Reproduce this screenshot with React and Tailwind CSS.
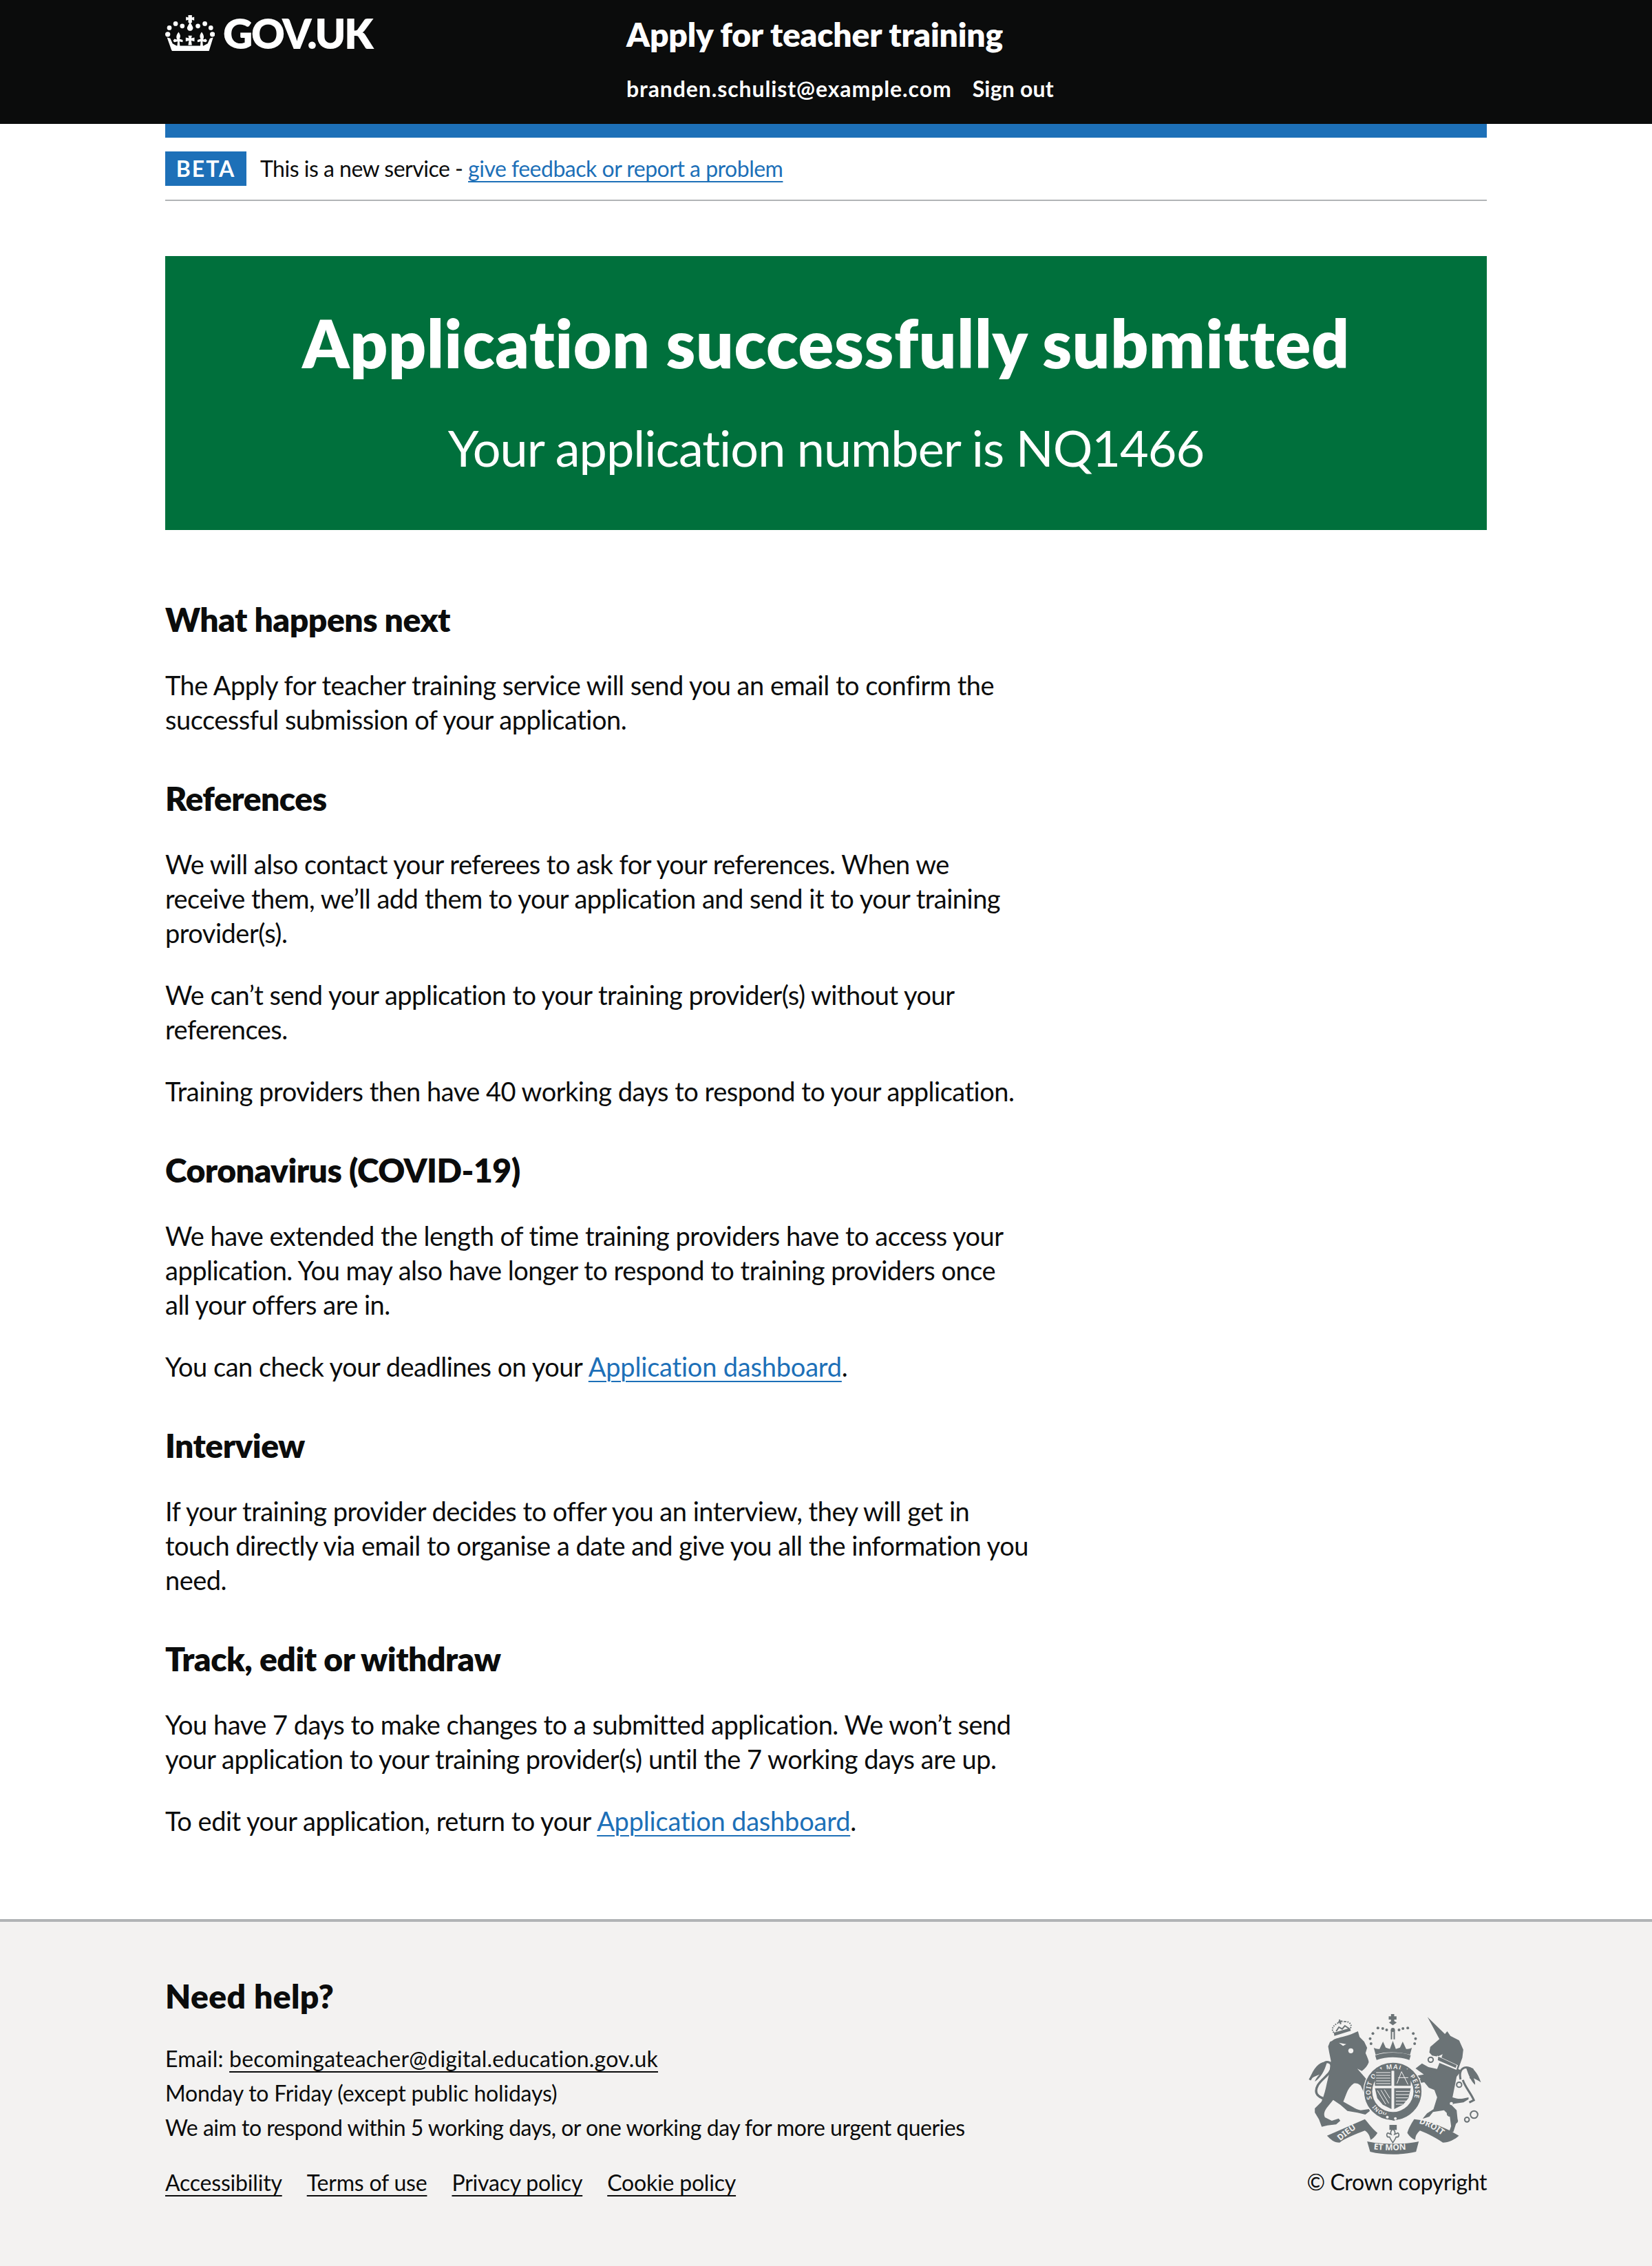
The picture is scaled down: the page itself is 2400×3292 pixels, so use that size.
const font = "font-['Lato',sans-serif]"

function Crown() {
  return (
    <svg viewBox="60 35 215 155" className="w-[72px] h-[52px] shrink-0" fill="#fff">
      <path d="M160 35h16v10l10-3v16l-10-3v12l-5 2 9 17c3 8-3 17-12 17s-15-9-12-17l9-17-5-2V55l-10 3V42l10 3z" />
      <circle cx="105" cy="72" r="10" />
      <circle cx="134" cy="82" r="10" />
      <circle cx="78" cy="90" r="10" />
      <circle cx="71" cy="118" r="11" />
      <circle cx="232" cy="72" r="10" />
      <circle cx="202" cy="82" r="10" />
      <circle cx="258" cy="90" r="10" />
      <circle cx="265" cy="118" r="11" />
      <path d="M118 108c8 12 10 20 4 30l14 4 0 10-14-3 2 20h-12l2-20-14 3-6-6 6-8 12 3c-6-10-4-20 6-33z" />
      <path d="M218 108c-8 12-10 20-4 30l-14 4 0 10 14-3-2 20h12l-2-20 14 3 6-6-6-8-12 3c6-10 4-20-6-33z" />
      <path d="M160 124h16l-3 11 14-3v17l-14-4 3 20h-16l3-20-14 4v-17l14 3z" />
      <path d="M68 132l14 4 10 22 18 10h116l18-10 10-22 14-4-18 58H90l-3-4z" />
    </svg>
  )
}

function Arms() {
  return (
    <svg viewBox="130 115 755 612" className="w-[252px] h-[204px]" fill="#6b7376">
      <defs>
        <path id="garterTop" d="M406 485A97 97 0 1 1 559 526" />
        <path id="garterLeft" d="M472 546A97 97 0 0 1 406 485" />
        <path id="ribLeft" d="M268 668C300 640 340 610 372 595" />
        <path id="ribMid" d="M410 704c50 6 120 6 176-2" />
        <path id="ribRight" d="M610 592c40 10 85 35 122 72" />
      </defs>
      {/* lion */}
      <path d="M232 232c10-12 40-15 68-24s36-15 45-18l7 25 20 20 13 27-7 23c6 14 14 30 14 40-5 15-18 30-30 38l-20-10 52 60 6 52-25 2-18-40c-10-10-20-12-30-10-14 10-26 25-32 44l-14 36 40 22c12 8 24 12 36 15l36-5 4 8-20 16-34-8-44-8-30-26-32-22c-14 18-28 32-35 46-5 12-6 20-1 30l30 15 30-10 7 10-18 16-38 4-25 6-12-32-18-30 0-18 28-28c10-20 18-50 24-80l12-50 6-50-7-34-5-28 8-20z" />
      <path d="M228 490c-50-5-80-25-58-65 18-30 60-50 60-80 0-20-18-25-30-18-22 10-45 40-65 75" fill="none" stroke="#6b7376" strokeWidth="10" />
      <path d="M210 325c-28-6-55 15-78 78 18-14 32-20 45-24-10 10-18 22-20 30 25-15 42-45 53-84z" />
      {/* lion crown */}
      <path d="M242 210l72-22-4-12-70 20z" />
      <g fill="none" stroke="#6b7376" strokeWidth="6">
        <path d="M240 196c-18-20 8-40 24-44M312 176c10-14-6-30-24-28M264 152c10-6 16-6 24-4" strokeDasharray="5 5" />
        <path d="M250 190l12-18 14 8 12-14 18 12" />
      </g>
      <path d="M258 148l5-2-2-6 6-2 2 6 6-2 1 6-5 2 2 8-6 2-3-8-5 2z" />
      <circle cx="314" cy="275" r="11" fill="#f3f2f1" />
      <path d="M262 240l32 6-14 8z" fill="#f3f2f1" />
      {/* unicorn */}
      <path d="M660 258l40-34-52-96 76 74 10-12 14 20 38 20 18 40-4 35-18 50 15 5-22 28-10 50-8 40c15 5 30 8 45 5l25-5 0 8-22 14-42 6-10 6 22 22 4 38-18 56-22 8 12-32-6-45-25-25-48 8-16 20-30 10 20-24 28-18 16-52-12-32-24-10-20-24-20 4-16-10 20-10-20-12 34-6-36-26 28-22 28 16 38 8 18-46 6-18-22 10-24-4-12-14z" />
      <path d="M792 400c-10-50 18-62 52-44 10 18-2 30-10 40M802 402c12 35 34 55 48 88l-20 10" fill="none" stroke="#6b7376" strokeWidth="9" />
      <path d="M815 345c25-5 50 20 66 68-14-10-25-15-32-18 5 10 8 20 6 28-22-22-30-50-40-78z" />
      <g fill="none" stroke="#6b7376" strokeWidth="6">
        <circle cx="662" cy="314" r="11" /><circle cx="652" cy="398" r="11" /><circle cx="786" cy="423" r="11" /><circle cx="745" cy="549" r="10" /><circle cx="768" cy="580" r="10" /><circle cx="820" cy="575" r="10" /><circle cx="851" cy="553" r="16" />
      </g>
      <circle cx="775" cy="467" r="7" fill="#f3f2f1" />
      <circle cx="752" cy="505" r="7" fill="#f3f2f1" />
      <path d="M690 296l90 42-6 20-88-36z" fill="#f3f2f1" />
      <path d="M695 300l80 38-4 12-78-34z" />
      {/* royal crown */}
      <path d="M489 115h14v10h10v14h-10v10h-14v-10h-10v-14h10z" />
      <path d="M480 152l17-10 17 10-17 12z" />
      <path d="M488 185h6v40h-6zM500 185h6v40h-6z" />
      <g>
        <circle cx="410" cy="200" r="6" /><circle cx="398" cy="222" r="6" /><circle cx="402" cy="244" r="6" /><circle cx="432" cy="176" r="6" /><circle cx="453" cy="178" r="6" /><circle cx="470" cy="184" r="6" /><circle cx="524" cy="184" r="6" /><circle cx="541" cy="178" r="6" /><circle cx="562" cy="176" r="6" /><circle cx="586" cy="200" r="6" /><circle cx="596" cy="222" r="6" /><circle cx="592" cy="244" r="6" /><circle cx="497" cy="184" r="9" />
      </g>
      <path d="M414 262c10 5 18 5 25 5l15-32 12 26 18 6 13-35 13 35 18-6 12-26 15 32c7 0 15 0 25-5l-8 30c-50-14-110-14-150 0z" />
      <path d="M420 295c45-16 110-16 155 0l-6 20c-45-16-100-16-143 0z" />
      {/* garter and shield */}
      <circle cx="497" cy="452" r="127" stroke="#f3f2f1" strokeWidth="4" />
      <circle cx="497" cy="452" r="90" fill="#f3f2f1" />
      <text fontFamily="'Noto Sans', sans-serif" fontSize="28" fontWeight="600" letterSpacing="3" fill="#f3f2f1">
        <textPath href="#garterTop">SOIT QUI MAL Y PENSE</textPath>
      </text>
      <text fontFamily="'Noto Sans', sans-serif" fontSize="24" fontWeight="600" fill="#f3f2f1">
        <textPath href="#garterLeft">HONI</textPath>
      </text>
      <path d="M419 356h72v72h-72zM503 356h72v72h-72zM503 438h72l-10 44-24 28-38 19zM419 438h72v91l-38-19-24-28z" />
      <g stroke="#f3f2f1" strokeWidth="3" fill="none">
        <path d="M424 370h62M424 382h62M424 394h62M424 406h62M424 418h62M510 452h60M510 466h58M510 480h54M510 494h46M510 508h32" />
        <path d="M430 448l36 60M445 446l34 58M460 444l24 38" />
        <path d="M515 418l20-52 28 56M520 392l44 0" />
      </g>
      <path d="M440 550l56 6 50-18 14 14-58 28-54-14z" />
      <circle cx="473" cy="564" r="6" fill="#f3f2f1" />
      <circle cx="508" cy="570" r="6" fill="#f3f2f1" />
      {/* motto ribbons */}
      <path d="M210 645l165-72c10 10 30 40 55 60-10 15-20 25-30 30-5-20-10-30-25-40-40 15-90 35-110 52-25 0-40-15-55-30z" />
      <path d="M785 645c-50-30-120-65-195-72-10 15-25 40-30 60 10 15 20 25 35 30 0-20 10-30 20-40 40 15 75 35 100 52 25 0 55-15 70-30z" />
      <path d="M385 670c60 14 170 14 225 0l-12 45c-60 15-140 15-200 0z" />
      <text fontFamily="'Noto Sans', sans-serif" fontSize="36" fontWeight="700" fill="#f3f2f1"><textPath href="#ribLeft">DIEU</textPath></text>
      <text fontFamily="'Noto Sans', sans-serif" fontSize="36" fontWeight="700" fill="#f3f2f1"><textPath href="#ribMid" startOffset="3">ET MON</textPath></text>
      <text fontFamily="'Noto Sans', sans-serif" fontSize="36" fontWeight="700" fill="#f3f2f1"><textPath href="#ribRight">DROIT</textPath></text>
      {/* fleur */}
      <path d="M482 598h32v22h-32z" />
      <path d="M497 615c8 8 12 16 8 24l14-6c6 4 6 12 0 18h-8c-2 8-6 12-14 24-8-12-12-16-14-24h-8c-6-6-6-14 0-18l14 6c-4-8 0-16 8-24z" fill="none" stroke="#6b7376" strokeWidth="5" />
    </svg>
  )
}

function Heading({ children }) {
  return <h2 className="pt-5 mb-10 text-[48px] leading-[60px] font-extrabold tracking-[-0.5px]">{children}</h2>
}

function Para({ children }) {
  return <p className="mb-10 text-[38px] leading-[50px] tracking-[-0.5px]">{children}</p>
}

function BodyLink({ children }) {
  return <a href="#" className="text-[#1d70b8] underline decoration-[2px] underline-offset-[6px] tracking-[-0.2px]">{children}</a>
}

function FooterLink({ children }) {
  return <a href="#" className="underline decoration-[2px] underline-offset-[6px]">{children}</a>
}

export default function App() {
  return (
    <div className={`${font} min-h-[3292px] bg-white text-[#0b0c0c] flex flex-col`}>
      <header className="h-[180px] bg-[#0b0c0c] text-white">
        <div className="mx-auto w-[1920px] flex">
          <div className="w-[670px] pt-[15px] flex items-start gap-[12px]">
            <div className="pt-[7px]"><Crown /></div>
            <span className="text-[60px] leading-[66px] font-extrabold tracking-[-2.3px]">GOV.UK</span>
          </div>
          <div className="pt-[20px]">
            <div className="text-[48px] leading-[60px] font-extrabold tracking-[-0.2px]">Apply for teacher training</div>
            <div className="mt-[24px] flex gap-[30px] text-[32px] leading-[50px] font-bold">
              <a href="#" className="tracking-[0.9px]">branden.schulist@example.com</a>
              <a href="#" className="tracking-[0.2px]">Sign out</a>
            </div>
          </div>
        </div>
      </header>

      <div className="mx-auto w-[1920px]">
        <div className="h-5 bg-[#1d70b8]" />
        <div className="py-5 border-b-2 border-[#b1b4b6] flex items-center gap-5 text-[32px] leading-[50px]">
          <strong className="w-[118px] h-[50px] bg-[#1d70b8] text-white font-bold tracking-[2px] text-center">BETA</strong>
          <span className="tracking-[-0.5px]">This is a new service - <a href="#" className="text-[#1d70b8] underline decoration-[2px] underline-offset-[6px]">give feedback or report a problem</a></span>
        </div>

        <div className="mt-20 h-[398px] bg-[#00703c] text-white text-center flex flex-col items-center pt-[66px]">
          <h1 className="text-[96px] leading-[120px] font-extrabold tracking-[0.7px]">Application successfully submitted</h1>
          <p className="mt-[50px] text-[72px] leading-[84px] tracking-[-1px]">Your application number is NQ1466</p>
        </div>

        <main className="pt-[80px] pb-[78px] max-w-[1280px]">
          <Heading>What happens next</Heading>
          <Para>The Apply for teacher training service will send you an email to confirm the<br />successful submission of your application.</Para>
          <Heading>References</Heading>
          <Para>We will also contact your referees to ask for your references. When we<br />receive them, we’ll add them to your application and send it to your training<br />provider(s).</Para>
          <Para>We can’t send your application to your training provider(s) without your<br />references.</Para>
          <Para>Training providers then have 40 working days to respond to your application.</Para>
          <Heading>Coronavirus (COVID-19)</Heading>
          <Para>We have extended the length of time training providers have to access your<br />application. You may also have longer to respond to training providers once<br />all your offers are in.</Para>
          <Para>You can check your deadlines on your <BodyLink>Application dashboard</BodyLink>.</Para>
          <Heading>Interview</Heading>
          <Para>If your training provider decides to offer you an interview, they will get in<br />touch directly via email to organise a date and give you all the information you<br />need.</Para>
          <Heading>Track, edit or withdraw</Heading>
          <Para>You have 7 days to make changes to a submitted application. We won’t send<br />your application to your training provider(s) until the 7 working days are up.</Para>
          <Para>To edit your application, return to your <BodyLink>Application dashboard</BodyLink>.</Para>
        </main>
      </div>

      <footer className="flex-1 border-t-4 border-[#b1b4b6] bg-[#f3f2f1]">
        <div className="mx-auto w-[1920px] pt-[78px] flex justify-between">
          <div className="text-[32px] leading-[50px]">
            <h2 className="text-[48px] leading-[60px] font-extrabold tracking-[0.4px] mb-[36px]">Need help?</h2>
            <p className="tracking-[0.2px]">Email: <FooterLink>becomingateacher@digital.education.gov.uk</FooterLink></p>
            <p className="tracking-[-0.2px]">Monday to Friday (except public holidays)</p>
            <p className="tracking-[-0.5px]">We aim to respond within 5 working days, or one working day for more urgent queries</p>
            <div className="mt-[30px] flex gap-[36px] tracking-[-0.2px]">
              <FooterLink>Accessibility</FooterLink>
              <FooterLink>Terms of use</FooterLink>
              <FooterLink>Privacy policy</FooterLink>
              <FooterLink>Cookie policy</FooterLink>
            </div>
          </div>
          <div className="flex flex-col items-end pt-[56px]">
            <div className="mr-[7px]"><Arms /></div>
            <div className="mt-[15px] text-[32px] leading-[50px] tracking-[-0.4px]">© Crown copyright</div>
          </div>
        </div>
      </footer>
    </div>
  )
}
